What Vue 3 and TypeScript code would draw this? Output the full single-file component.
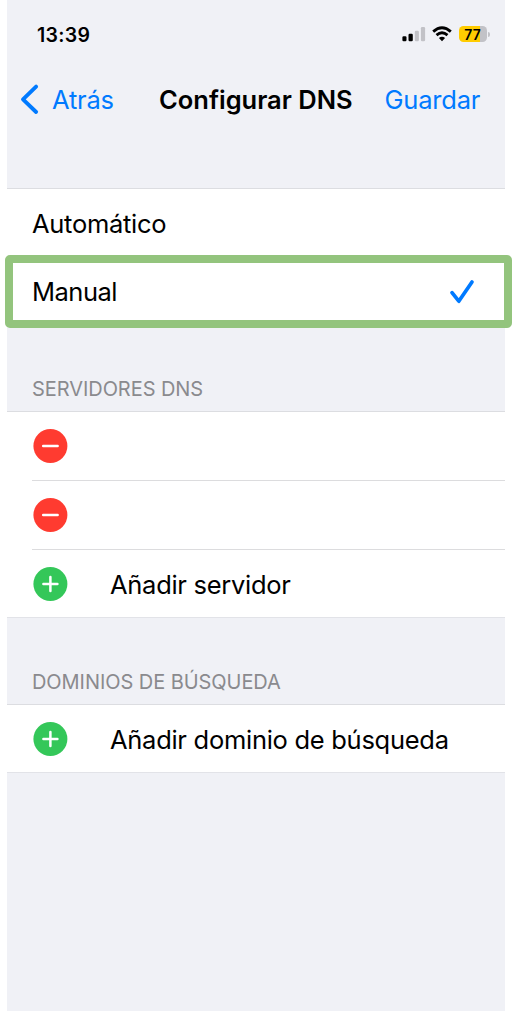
<script setup lang="ts">
interface Server {
  id: number
}

const servers: Server[] = [{ id: 1 }, { id: 2 }]
</script>

<template>
  <main class="phone">
    <header class="top">
      <div class="status">
        <span class="time">13:39</span>
        <div class="indicators">
          <svg class="signal" width="24" height="16" viewBox="0 0 24 16">
            <rect x="0.4" y="10.3" width="4.1" height="4.9" rx="1.2" fill="#000" />
            <rect x="6.5" y="7.8" width="4.3" height="7.4" rx="1.2" fill="#000" />
            <rect x="12.8" y="4.7" width="4.1" height="10.5" rx="1.2" fill="#c2c2c7" />
            <rect x="18.9" y="1" width="4.2" height="14.2" rx="1.2" fill="#c2c2c7" />
          </svg>
          <svg class="wifi" width="20" height="16" viewBox="0 0 20 16">
            <path d="M1.2 5.6 Q10 -2.2 18.8 5.6" />
            <path d="M4.5 9.1 Q10 4.3 15.5 9.1" />
            <path class="dot" d="M6.9 12 Q10 9.4 13.1 12 L10 15.3Z" />
          </svg>
          <div class="battery"><span class="level">77</span></div>
          <i class="tip"></i>
        </div>
      </div>
      <nav class="nav">
        <svg class="back" width="20" height="32" viewBox="0 0 20 32">
          <path d="M16.1 3.6 L3 16.3 L16.1 29" />
        </svg>
        <span class="link atras">Atrás</span>
        <h1 class="title">Configurar DNS</h1>
        <span class="link guardar">Guardar</span>
      </nav>
    </header>

    <section class="group modes">
      <div class="row"><span class="label automatic">Automático</span></div>
      <div class="row selected">
        <span class="label manual">Manual</span>
        <svg class="check" width="26" height="26" viewBox="0 0 26 26">
          <path d="M3 13.6 L9.8 22.2 L23 3" />
        </svg>
      </div>
    </section>

    <h2 class="heading servers-heading">SERVIDORES DNS</h2>
    <section class="group">
      <div v-for="server in servers" :key="server.id" class="row divided">
        <svg class="badge" width="36" height="36" viewBox="0 0 36 36">
          <circle cx="18.4" cy="18" r="17" fill="#ff3b30" />
          <path d="M11.2 18H25.6" />
        </svg>
      </div>
      <div class="row last">
        <svg class="badge" width="36" height="36" viewBox="0 0 36 36">
          <circle cx="18.4" cy="18" r="17" fill="#34c759" />
          <path d="M11.4 18H25.4M18.4 11V25" />
        </svg>
        <span class="label add-server">Añadir servidor</span>
      </div>
    </section>

    <h2 class="heading domains-heading">DOMINIOS DE BÚSQUEDA</h2>
    <section class="group">
      <div class="row last">
        <svg class="badge" width="36" height="36" viewBox="0 0 36 36">
          <circle cx="18.4" cy="18" r="17" fill="#34c759" />
          <path d="M11.4 18H25.4M18.4 11V25" />
        </svg>
        <span class="label add-domain">Añadir dominio de búsqueda</span>
      </div>
    </section>
  </main>
</template>

<style>
html,
body {
  background: #fff;
  overflow: hidden;
}
</style>

<style scoped>
* {
  box-sizing: border-box;
}
.phone {
  width: 498px;
  height: 1011px;
  margin-left: 7px;
  background: #f0f1f6;
  color: #000;
  font-family: Inter, "Liberation Sans", sans-serif;
  white-space: nowrap;
}
.top {
  height: 188px;
}
.status {
  display: flex;
  justify-content: space-between;
  align-items: center;
  height: 68px;
  padding: 0 15px 0 30px;
}
.time {
  padding-top: 1px;
  font-size: 19.5px;
  font-weight: 600;
  letter-spacing: 0.3px;
}
.indicators {
  display: flex;
  align-items: center;
}
.wifi {
  margin-left: 6px;
  fill: none;
  stroke: #000;
  stroke-width: 2.8;
}
.wifi .dot {
  fill: #000;
  stroke: none;
}
.battery {
  width: 28px;
  height: 16px;
  margin-left: 7px;
  border-radius: 4.5px;
  background: linear-gradient(90deg, #fc0 21.5px, #c2c2c7 21.5px);
  text-align: center;
}
.level {
  display: block;
  padding-right: 1px;
  font-size: 14px;
  font-weight: 600;
  line-height: 17px;
}
.tip {
  width: 2px;
  height: 5px;
  margin-left: 1px;
  border-radius: 0 2px 2px 0;
  background: #c2c2c7;
}
.nav {
  display: flex;
  align-items: center;
  height: 62px;
  padding-left: 13px;
}
.back {
  fill: none;
  stroke: #007aff;
  stroke-width: 3.9;
  stroke-linecap: round;
  stroke-linejoin: round;
}
.link {
  color: #007aff;
  font-size: 25.5px;
  letter-spacing: -0.2px;
}
.atras {
  width: 107px;
  margin-left: 12px;
}
.title {
  width: 225.5px;
  margin: 0;
  font-size: 25.5px;
  font-weight: 600;
}
.group {
  border-top: 1px solid #dcdde1;
  border-bottom: 1px solid #e2e3e8;
  background: #fff;
}
.row {
  position: relative;
  display: flex;
  align-items: center;
  height: 68px;
  padding-left: 25px;
}
.divided {
  height: 69px;
  padding-bottom: 1px;
}
.last {
  height: 67px;
}
.divided::after {
  position: absolute;
  right: 0;
  bottom: 0;
  left: 25px;
  height: 1px;
  background: #dcdcde;
  content: "";
}
.label {
  font-size: 25.5px;
  letter-spacing: -0.28px;
}
.selected {
  z-index: 1;
  width: 507px;
  height: 73px;
  margin: -2px 0 0 -2px;
  padding: 0 29px 0 19px;
  border: 8px solid #93c47d;
  border-radius: 5px;
  justify-content: space-between;
}
.manual {
  letter-spacing: -0.5px;
}
.modes {
  height: 139px;
}
.check {
  fill: none;
  stroke: #007aff;
  stroke-width: 3.7;
  stroke-linecap: round;
  stroke-linejoin: round;
}
.heading {
  display: flex;
  align-items: flex-end;
  margin: 0;
  padding: 0 0 10px 25px;
  color: #8a8a8e;
  font-size: 20px;
  font-weight: 400;
  letter-spacing: -0.06px;
}
.servers-heading {
  height: 84px;
}
.domains-heading {
  height: 86px;
}
.badge {
  flex: none;
}
.badge path {
  fill: none;
  stroke: #fff;
  stroke-width: 2.5;
  stroke-linecap: round;
}
.badge + .label {
  margin-left: 42px;
  padding-top: 2px;
}
</style>
